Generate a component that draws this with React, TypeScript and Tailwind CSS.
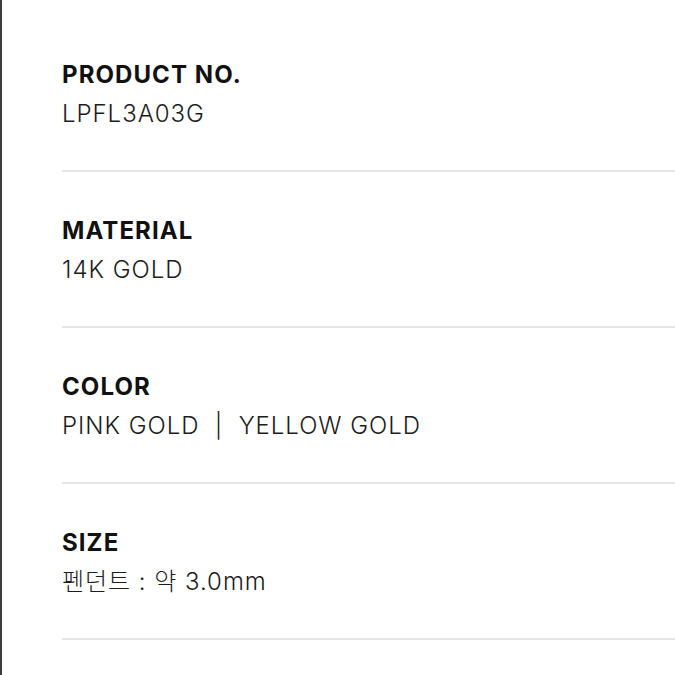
const specs = [
  { label: "PRODUCT NO.", value: "LPFL3A03G" },
  { label: "MATERIAL", value: "14K GOLD" },
  { label: "COLOR", value: "PINK GOLD  |  YELLOW GOLD" },
  { label: "SIZE", value: "펜던트 : 약 3.0mm" },
];

export default function App() {
  return (
    <main className="min-h-screen border-l-2 border-[#3d3d3d] bg-white pt-[16px] font-['Inter','Noto_Sans_CJK_KR',sans-serif]">
      {specs.map((spec) => (
        <section
          key={spec.label}
          className="ml-[60px] border-b-2 border-[#e6e6e6] pt-[45px] pb-[42px]"
        >
          <h2 className="text-[24px] leading-[28px] font-bold tracking-[0.045em] text-[#111]">
            {spec.label}
          </h2>
          <p className="mt-[11px] text-[24px] leading-[28px] font-light tracking-[0.04em] whitespace-pre text-[#1c1c1c]">
            {spec.value}
          </p>
        </section>
      ))}
    </main>
  );
}
